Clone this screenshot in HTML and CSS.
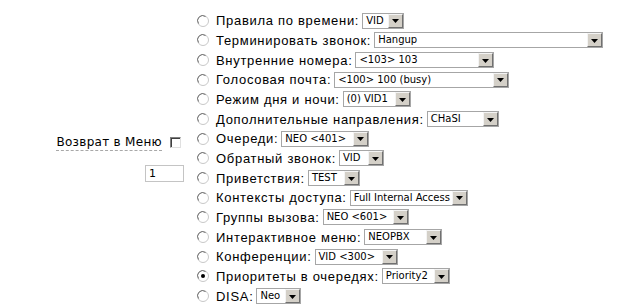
FILE: index.html
```html
<!DOCTYPE html>
<html>
<head>
<meta charset="utf-8">
<link rel="stylesheet" href="styles.css">
</head>
<body>
<div class="page">
  <div class="left">
    <div class="ret"><span class="ret-label">Возврат в Меню</span><span class="chk"></span></div>
    <div class="inp">1</div>
  </div>
  <div class="list">
    <div class="row"><svg class="radio" width="12" height="12" viewBox="0 0 12 12"><circle cx="6" cy="6" r="5.5" fill="#fff" stroke="#c8c8c8"/><path d="M1.6 8.6 A5 5 0 0 1 8.6 1.6" fill="none" stroke="#707070"/></svg><span class="lbl">Правила по времени:</span><span class="sel" style="width:42px"><span class="val">VID</span><span class="btn"><svg width="7" height="4" viewBox="0 0 7 4"><path d="M0 0H7L3.5 4Z" fill="#000"/></svg></span></span></div>
    <div class="row"><svg class="radio" width="12" height="12" viewBox="0 0 12 12"><circle cx="6" cy="6" r="5.5" fill="#fff" stroke="#c8c8c8"/><path d="M1.6 8.6 A5 5 0 0 1 8.6 1.6" fill="none" stroke="#707070"/></svg><span class="lbl">Терминировать звонок:</span><span class="sel" style="width:229px"><span class="val">Hangup</span><span class="btn"><svg width="7" height="4" viewBox="0 0 7 4"><path d="M0 0H7L3.5 4Z" fill="#000"/></svg></span></span></div>
    <div class="row"><svg class="radio" width="12" height="12" viewBox="0 0 12 12"><circle cx="6" cy="6" r="5.5" fill="#fff" stroke="#c8c8c8"/><path d="M1.6 8.6 A5 5 0 0 1 8.6 1.6" fill="none" stroke="#707070"/></svg><span class="lbl">Внутренние номера:</span><span class="sel" style="width:139px"><span class="val">&lt;103&gt; 103</span><span class="btn"><svg width="7" height="4" viewBox="0 0 7 4"><path d="M0 0H7L3.5 4Z" fill="#000"/></svg></span></span></div>
    <div class="row"><svg class="radio" width="12" height="12" viewBox="0 0 12 12"><circle cx="6" cy="6" r="5.5" fill="#fff" stroke="#c8c8c8"/><path d="M1.6 8.6 A5 5 0 0 1 8.6 1.6" fill="none" stroke="#707070"/></svg><span class="lbl">Голосовая почта:</span><span class="sel" style="width:175px"><span class="val">&lt;100&gt; 100 (busy)</span><span class="btn"><svg width="7" height="4" viewBox="0 0 7 4"><path d="M0 0H7L3.5 4Z" fill="#000"/></svg></span></span></div>
    <div class="row"><svg class="radio" width="12" height="12" viewBox="0 0 12 12"><circle cx="6" cy="6" r="5.5" fill="#fff" stroke="#c8c8c8"/><path d="M1.6 8.6 A5 5 0 0 1 8.6 1.6" fill="none" stroke="#707070"/></svg><span class="lbl">Режим дня и ночи:</span><span class="sel" style="width:68px"><span class="val">(0) VID1</span><span class="btn"><svg width="7" height="4" viewBox="0 0 7 4"><path d="M0 0H7L3.5 4Z" fill="#000"/></svg></span></span></div>
    <div class="row"><svg class="radio" width="12" height="12" viewBox="0 0 12 12"><circle cx="6" cy="6" r="5.5" fill="#fff" stroke="#c8c8c8"/><path d="M1.6 8.6 A5 5 0 0 1 8.6 1.6" fill="none" stroke="#707070"/></svg><span class="lbl">Дополнительные направления:</span><span class="sel" style="width:72px"><span class="val">CHaSI</span><span class="btn"><svg width="7" height="4" viewBox="0 0 7 4"><path d="M0 0H7L3.5 4Z" fill="#000"/></svg></span></span></div>
    <div class="row"><svg class="radio" width="12" height="12" viewBox="0 0 12 12"><circle cx="6" cy="6" r="5.5" fill="#fff" stroke="#c8c8c8"/><path d="M1.6 8.6 A5 5 0 0 1 8.6 1.6" fill="none" stroke="#707070"/></svg><span class="lbl">Очереди:</span><span class="sel" style="width:88px"><span class="val">NEO &lt;401&gt;</span><span class="btn"><svg width="7" height="4" viewBox="0 0 7 4"><path d="M0 0H7L3.5 4Z" fill="#000"/></svg></span></span></div>
    <div class="row"><svg class="radio" width="12" height="12" viewBox="0 0 12 12"><circle cx="6" cy="6" r="5.5" fill="#fff" stroke="#c8c8c8"/><path d="M1.6 8.6 A5 5 0 0 1 8.6 1.6" fill="none" stroke="#707070"/></svg><span class="lbl">Обратный звонок:</span><span class="sel" style="width:45px"><span class="val">VID</span><span class="btn"><svg width="7" height="4" viewBox="0 0 7 4"><path d="M0 0H7L3.5 4Z" fill="#000"/></svg></span></span></div>
    <div class="row"><svg class="radio" width="12" height="12" viewBox="0 0 12 12"><circle cx="6" cy="6" r="5.5" fill="#fff" stroke="#c8c8c8"/><path d="M1.6 8.6 A5 5 0 0 1 8.6 1.6" fill="none" stroke="#707070"/></svg><span class="lbl">Приветствия:</span><span class="sel" style="width:52px"><span class="val">TEST</span><span class="btn"><svg width="7" height="4" viewBox="0 0 7 4"><path d="M0 0H7L3.5 4Z" fill="#000"/></svg></span></span></div>
    <div class="row"><svg class="radio" width="12" height="12" viewBox="0 0 12 12"><circle cx="6" cy="6" r="5.5" fill="#fff" stroke="#c8c8c8"/><path d="M1.6 8.6 A5 5 0 0 1 8.6 1.6" fill="none" stroke="#707070"/></svg><span class="lbl">Контексты доступа:</span><span class="sel" style="width:118px"><span class="val">Full Internal Access</span><span class="btn"><svg width="7" height="4" viewBox="0 0 7 4"><path d="M0 0H7L3.5 4Z" fill="#000"/></svg></span></span></div>
    <div class="row"><svg class="radio" width="12" height="12" viewBox="0 0 12 12"><circle cx="6" cy="6" r="5.5" fill="#fff" stroke="#c8c8c8"/><path d="M1.6 8.6 A5 5 0 0 1 8.6 1.6" fill="none" stroke="#707070"/></svg><span class="lbl">Группы вызова:</span><span class="sel" style="width:86px"><span class="val">NEO &lt;601&gt;</span><span class="btn"><svg width="7" height="4" viewBox="0 0 7 4"><path d="M0 0H7L3.5 4Z" fill="#000"/></svg></span></span></div>
    <div class="row"><svg class="radio" width="12" height="12" viewBox="0 0 12 12"><circle cx="6" cy="6" r="5.5" fill="#fff" stroke="#c8c8c8"/><path d="M1.6 8.6 A5 5 0 0 1 8.6 1.6" fill="none" stroke="#707070"/></svg><span class="lbl">Интерактивное меню:</span><span class="sel" style="width:78px"><span class="val">NEOPBX</span><span class="btn"><svg width="7" height="4" viewBox="0 0 7 4"><path d="M0 0H7L3.5 4Z" fill="#000"/></svg></span></span></div>
    <div class="row"><svg class="radio" width="12" height="12" viewBox="0 0 12 12"><circle cx="6" cy="6" r="5.5" fill="#fff" stroke="#c8c8c8"/><path d="M1.6 8.6 A5 5 0 0 1 8.6 1.6" fill="none" stroke="#707070"/></svg><span class="lbl">Конференции:</span><span class="sel" style="width:83px"><span class="val">VID &lt;300&gt;</span><span class="btn"><svg width="7" height="4" viewBox="0 0 7 4"><path d="M0 0H7L3.5 4Z" fill="#000"/></svg></span></span></div>
    <div class="row"><svg class="radio" width="12" height="12" viewBox="0 0 12 12"><circle cx="6" cy="6" r="5.5" fill="#fff" stroke="#c8c8c8"/><path d="M1.6 8.6 A5 5 0 0 1 8.6 1.6" fill="none" stroke="#707070"/><circle cx="6" cy="6" r="2" fill="#000"/></svg><span class="lbl">Приоритеты в очередях:</span><span class="sel" style="width:68px"><span class="val">Priority2</span><span class="btn"><svg width="7" height="4" viewBox="0 0 7 4"><path d="M0 0H7L3.5 4Z" fill="#000"/></svg></span></span></div>
    <div class="row"><svg class="radio" width="12" height="12" viewBox="0 0 12 12"><circle cx="6" cy="6" r="5.5" fill="#fff" stroke="#c8c8c8"/><path d="M1.6 8.6 A5 5 0 0 1 8.6 1.6" fill="none" stroke="#707070"/></svg><span class="lbl">DISA:</span><span class="sel" style="width:45px"><span class="val">Neo</span><span class="btn"><svg width="7" height="4" viewBox="0 0 7 4"><path d="M0 0H7L3.5 4Z" fill="#000"/></svg></span></span></div>
  </div>
</div>
</body>
</html>
```
FILE: styles.css
```css
html, body {
  margin: 0;
  padding: 0;
  background: #fff;
}
.page {
  display: flex;
  padding-top: 11px;
  color: #000;
}
.left {
  width: 184px;
  display: flex;
  flex-direction: column;
  justify-content: center;
  align-items: flex-end;
  margin-right: 13px;
  padding-bottom: 2px;
}
.ret {
  display: flex;
  align-items: center;
  height: 20px;
  margin-right: 3px;
}
.ret-label {
  font-family: "DejaVu Sans", Verdana, sans-serif;
  font-size: 12px;
  line-height: 14px;
  letter-spacing: 0.3px;
  border-bottom: 1px dashed #a8a8a8;
  padding-bottom: 1px;
  margin-top: 2px;
}
.chk {
  width: 9px;
  height: 9px;
  margin-left: 8px;
  border: 1px solid;
  border-color: #808080 #e0e0e0 #e0e0e0 #808080;
  box-shadow: inset 1px 1px 0 #404040;
  background: #fff;
}
.inp {
  box-sizing: border-box;
  width: 39px;
  height: 17px;
  margin-top: 13px;
  border: 1px solid #c4c4c4;
  font-family: "DejaVu Sans", Verdana, sans-serif;
  font-size: 11px;
  line-height: 15px;
  padding-left: 3px;
}
.list {
  display: flex;
  flex-direction: column;
}
.row {
  display: flex;
  align-items: center;
  height: 19.67px;
}
.radio {
  flex: none;
  margin-right: 7px;
}
.lbl {
  font-family: "Liberation Sans", Arial, sans-serif;
  font-size: 13px;
  line-height: 15px;
  letter-spacing: 0.7px;
  margin-right: 3px;
  white-space: nowrap;
}
.sel {
  box-sizing: border-box;
  display: flex;
  align-items: stretch;
  height: 16px;
  border: 1px solid #a6a6a6;
  background: #fff;
  flex: none;
}
.val {
  flex: 1;
  min-width: 0;
  font-family: "DejaVu Sans", Verdana, sans-serif;
  font-size: 10px;
  line-height: 14px;
  padding-left: 3px;
  letter-spacing: 0;
  white-space: nowrap;
  overflow: hidden;
}
.btn {
  box-sizing: border-box;
  width: 15px;
  flex: none;
  background: #d4d0c8;
  border: 1px solid;
  border-color: #f4f4f4 #707070 #707070 #f4f4f4;
  display: flex;
  align-items: center;
  justify-content: center;
}
.btn svg {
  display: block;
  margin-top: 1px;
}
```
